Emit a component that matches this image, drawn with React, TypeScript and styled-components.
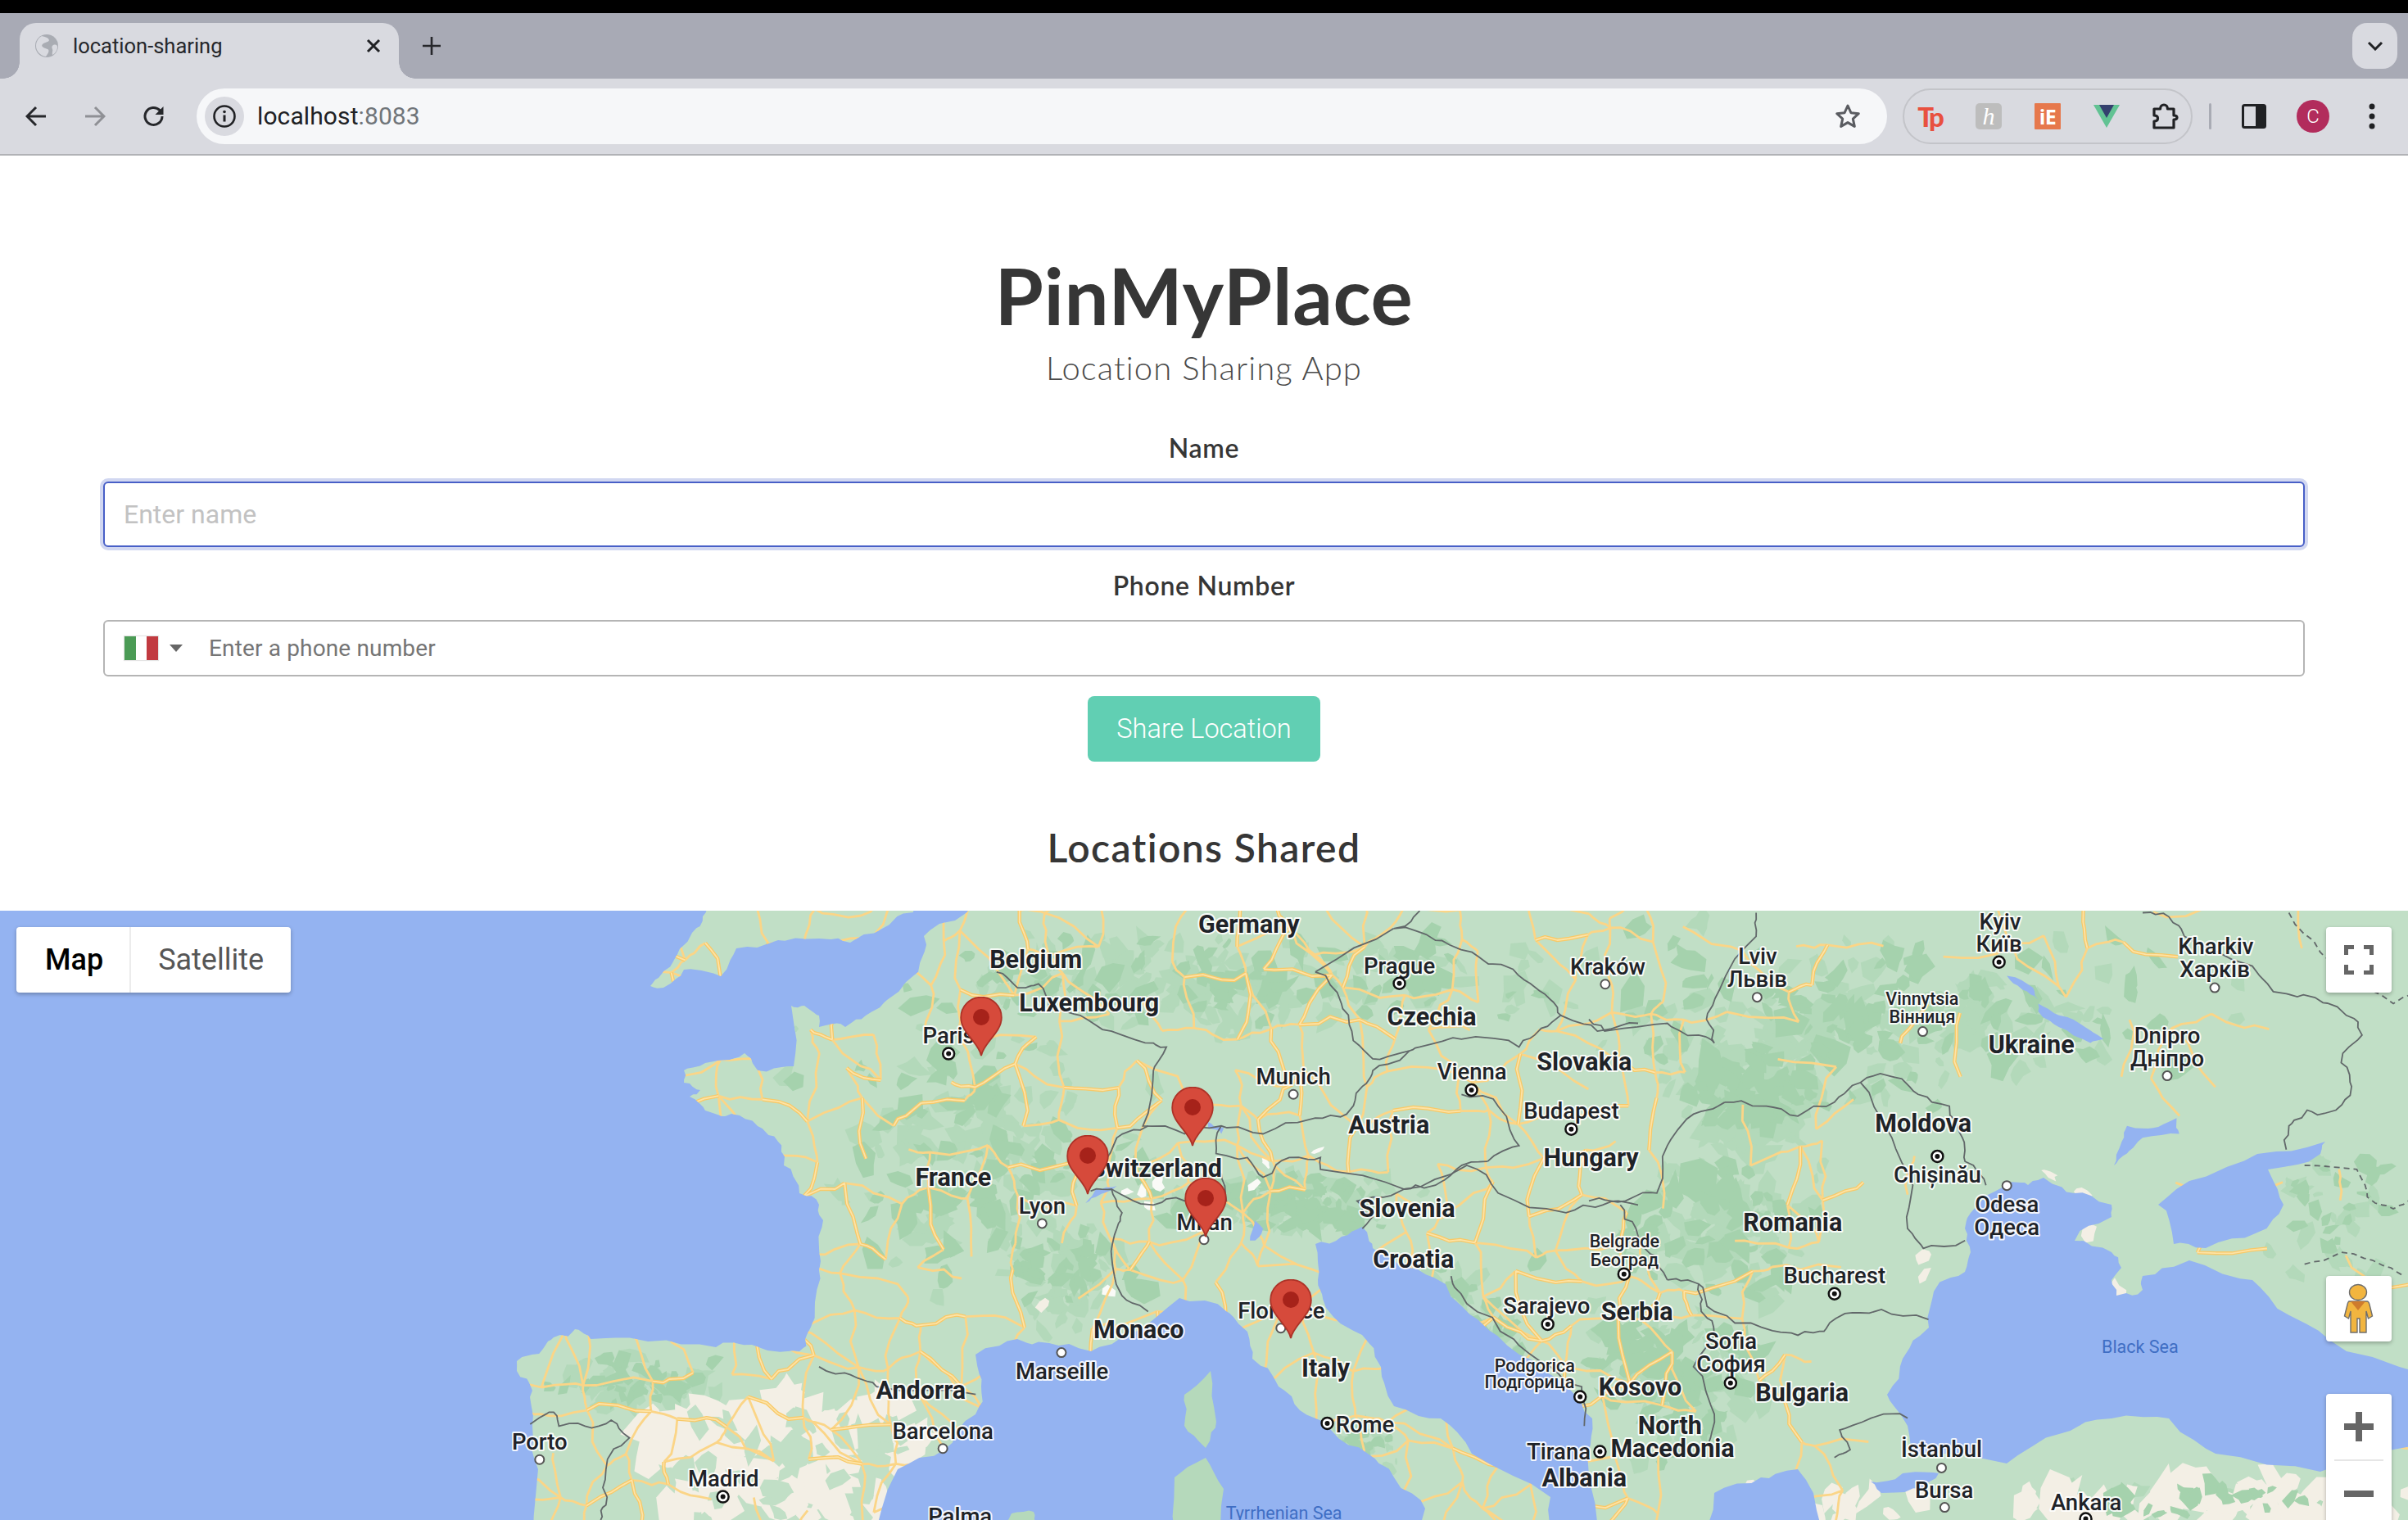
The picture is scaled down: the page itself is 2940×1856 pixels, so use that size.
import React, { useMemo } from "react";
import styled, { createGlobalStyle } from "styled-components";

type Pt = [number, number];
const z6 = (x: number, y: number): Pt => [x / 1.568, 1100 + y / 2.074];
const z7 = (x: number, y: number): Pt => [1000 + x / 1.568, 1100 + y / 2.074];
const z8 = (x: number, y: number): Pt => [1940 + x / 1.568, 1100 + y / 2.074];
const mapPts = (f: (x: number, y: number) => Pt, a: number[]) => {
  const o: Pt[] = [];
  for (let i = 0; i < a.length; i += 2) o.push(f(a[i], a[i + 1]));
  return o;
};
const pts = (a: Pt[]) => a.map((p) => `${p[0].toFixed(1)},${p[1].toFixed(1)}`).join(" ");

const rng = (seed: number) => () => {
  seed |= 0; seed = (seed + 0x6d2b79f5) | 0;
  let t = Math.imul(seed ^ (seed >>> 15), 1 | seed);
  t = (t + Math.imul(t ^ (t >>> 7), 61 | t)) ^ t;
  return ((t ^ (t >>> 14)) >>> 0) / 4294967296;
};

const roughR = rng(4242);
const roughen = (a: Pt[], amp: number, closed: boolean, depth = 2): Pt[] => {
  let cur = a;
  let k = amp;
  for (let d = 0; d < depth; d++) {
    const next: Pt[] = [];
    const n = closed ? cur.length : cur.length - 1;
    for (let i = 0; i < n; i++) {
      const p = cur[i];
      const q = cur[(i + 1) % cur.length];
      next.push(p);
      const len = Math.hypot(q[0] - p[0], q[1] - p[1]);
      if (len > 8) {
        next.push([
          (p[0] + q[0]) / 2 + (roughR() - 0.5) * Math.min(k, len * 0.35),
          (p[1] + q[1]) / 2 + (roughR() - 0.5) * Math.min(k, len * 0.35),
        ]);
      }
    }
    if (!closed) next.push(cur[cur.length - 1]);
    cur = next;
    k *= 0.6;
  }
  return cur;
};

const LAND: Pt[] = [
  [1204,1090],[1166,1124],[1128,1143],[1121,1187],[1083,1221],[1057,1240],[1032,1254],[1000,1254],[1000,1240],[982,1228],[966,1228],[969,1302],[925,1307],[909,1286],[861,1298],[835,1307],[835,1322],[855,1331],[842,1339],[861,1356],[893,1360],[925,1375],[950,1394],[957,1423],[976,1457],[1000,1471],[1005,1490],[1002,1540],[995,1590],[985,1630],[976,1650],[918,1642],[874,1645],[791,1638],[721,1635],[702,1623],[676,1633],[663,1647],[631,1662],[631,1674],[650,1698],[650,1741],[657,1794],[650,1900],[3000,1900],[3000,1090],
];
const ENGLAND: Pt[] = [[794,1204],[804,1194],[823,1172],[845,1139],[858,1119],[867,1090],[1115,1090],[1115,1114],[1077,1134],[1038,1151],[1000,1146],[950,1148],[899,1158],[880,1192],[835,1184],[810,1206]];
const MED: Pt[] = [[1064,1900],[1096,1794],[1153,1770],[1191,1727],[1198,1693],[1191,1654],[1242,1635],[1281,1640],[1332,1650],[1376,1630],[1440,1585],[1497,1601],[1523,1626],[1529,1659],[1561,1693],[1587,1722],[1625,1746],[1670,1775],[1702,1804],[1740,1842],[1746,1900]];
const ADRIATIC: Pt[] = [[1606,1519],[1638,1510],[1663,1498],[1676,1524],[1721,1548],[1765,1568],[1804,1611],[1855,1654],[1918,1698],[1944,1732],[1938,1775],[1950,1900],[1893,1900],[1893,1828],[1797,1775],[1759,1732],[1702,1717],[1686,1669],[1663,1630],[1619,1597],[1609,1563]];
const BLACK: Pt[] = [[2450,1447],[2406,1481],[2399,1500],[2406,1529],[2399,1553],[2361,1577],[2355,1621],[2323,1659],[2304,1703],[2329,1741],[2335,1775],[2450,1787],[2514,1751],[2578,1732],[2648,1732],[2705,1775],[2833,1797],[3000,1750],[3000,1690],[2865,1650],[2795,1606],[2750,1563],[2673,1539],[2616,1558],[2616,1575],[2584,1582],[2578,1563],[2590,1548],[2578,1529],[2533,1515],[2578,1486],[2578,1471],[2533,1457],[2495,1438],[2476,1447]];
const AZOV: Pt[] = [[2635,1471],[2654,1519],[2693,1524],[2756,1505],[2788,1471],[2769,1428],[2833,1409],[2839,1394],[2756,1409],[2673,1442]];
const AEGEAN: Pt[] = [[2083,1900],[2093,1823],[2150,1804],[2195,1794],[2214,1823],[2233,1900]];
const MARMARA: Pt[] = [[2284,1809],[2323,1799],[2367,1799],[2348,1818],[2297,1823]];
const CORSICA: Pt[] = [[1446,1703],[1478,1674],[1485,1736],[1472,1768],[1446,1741]];
const SARDINIA: Pt[] = [[1434,1804],[1472,1780],[1494,1818],[1491,1900],[1434,1900]];
const MALLORCA: Pt[] = [[1215,1870],[1235,1848],[1262,1846],[1270,1870]];
const LAKES: Pt[][] = [
  mapPts(z8, [860,260,900,290,950,320,985,350,960,360,900,320,860,280]),
  mapPts(z8, [1030,570,1080,575,1125,550,1130,590,1060,600,1030,640,1005,670,1020,610]),
  mapPts(z8, [800,190,850,220,860,250,830,225]),
  mapPts(z7, [745,560,775,575,770,590,745,575]),
  mapPts(z7, [530,730,570,722,530,750,510,765]),
  mapPts(z7, [835,810,850,830,835,860,825,860]),
];

const BORDERS: Pt[][] = [
  mapPts(z7, [340,180,380,220,420,210,440,270,500,290,560,330,640,360,665,370,640,430,620,570,700,590,770,570,850,590,950,550,1010,540,1040,470,1060,430,1130,380,1150,370,1230,350,1340,370,1370,340,1420,290,1400,250,1350,200,1290,160,1250,130,1180,100,1100,70,1150,25]),
  mapPts(z7, [950,180,1000,260,1020,330,1060,400,1130,380]),
  mapPts(z7, [950,180,1100,70]),
  mapPts(z7, [1420,290,1490,330,1568,310]),
  mapPts(z7, [770,570,760,640,820,650,850,700,900,650,960,650,960,680,1120,730,1180,720,1220,680,1280,660]),
  mapPts(z7, [520,720,570,600,630,570]),
  mapPts(z7, [520,735,560,730,580,790,570,830,560,900,580,1000,630,1040]),
  mapPts(z7, [560,730,640,770,700,760,780,760,770,690]),
  mapPts(z7, [1040,830,1060,800,1030,760,1120,730]),
  mapPts(z7, [1120,730,1240,670,1300,740,1430,790,1500,770,1568,770]),
  mapPts(z7, [1210,950,1240,1020,1330,1110,1400,1180,1460,1230,1465,1330]),
  mapPts(z7, [1280,660,1340,620,1300,520,1230,490]),
  mapPts(z7, [0,1180,60,1200,110,1230,300,1250]),
  mapPts(z8, [320,30,320,90,250,225,225,300,240,360,210,340,150,310,30,330,0,300]),
  mapPts(z8, [260,510,200,540,150,620,130,740,70,760,0,760]),
  mapPts(z8, [260,510,340,520,400,545,470,510,520,460,580,445,630,490,690,520,715,600,720,660,760,720]),
  mapPts(z8, [520,460,580,600,620,720,610,830,640,880,720,860]),
  mapPts(z8, [650,1060,560,1035,490,1045,450,1090,400,1100,330,1080,240,1040,210,970,150,960]),
  mapPts(z8, [210,970,215,1040,240,1100,200,1180,240,1300,230,1370]),
  mapPts(z8, [1060,30,1110,40,1140,90,1270,165,1310,230,1390,245,1450,290,1480,340,1440,410,1460,470,1430,530,1375,530,1340,570,1335,630]),
  mapPts(z8, [610,1310,540,1310,480,1340,500,1390,470,1410]),
  mapPts(z8, [60,770,90,830,130,900,150,960]),
  mapPts(z6, [1015,1325,1060,1295,1070,1330,1120,1330,1170,1315,1205,1360,1160,1440,1160,1530,1150,1568]),
].map((b) => roughen(b, 12, false));
const DASHED: Pt[][] = [
  mapPts(z8, [1340,30,1400,130,1440,180,1540,260,1568,240]),
  mapPts(z8, [1370,670,1470,680,1490,750,1540,780,1568,760]),
  mapPts(z8, [1370,920,1440,890,1500,910,1560,950]),
].map((b) => roughen(b, 8, false));

const ROUGH_LAND = pts(roughen(LAND, 11, true));
const ROUGH_ENGLAND = pts(roughen(ENGLAND, 10, true));
const SEAS = [MED, ADRIATIC, BLACK, AZOV, AEGEAN, MARMARA].map((s) => pts(roughen(s, 11, true)));
const ISLANDS = [CORSICA, SARDINIA, MALLORCA].map((s) => pts(roughen(s, 7, true)));
const LAKE_SHAPES = LAKES.map((s) => pts(roughen(s, 5, true)));

type Kind = "country" | "city" | "small" | "sea";
const L = (t: string, p: Pt, k: Kind) => ({ t, p, k });
const LABELS = [
  L("Germany", z7(823, 80), "country"), L("Belgium", z7(415, 170), "country"), L("Luxembourg", z7(517, 280), "country"),
  L("Prague", z7(1111, 184), "city"), L("Kraków", z7(1510, 186), "city"), L("Czechia", z7(1173, 316), "country"),
  L("Paris", z7(248, 360), "city"), L("Munich", z7(908, 465), "city"), L("Vienna", z7(1250, 453), "city"),
  L("Slovakia", z7(1465, 430), "country"), L("Budapest", z7(1440, 552), "city"), L("Austria", z7(1091, 590), "country"),
  L("Hungary", z7(1478, 672), "country"), L("France", z7(257, 722), "country"), L("Switzerland", z7(645, 698), "country"),
  L("Lyon", z7(427, 793), "city"), L("Milan", z7(738, 833), "city"), L("Slovenia", z7(1126, 800), "country"),
  L("Croatia", z7(1138, 930), "country"), L("Monaco", z7(612, 1108), "country"), L("Florence", z7(885, 1058), "city"),
  L("Marseille", z7(465, 1212), "city"), L("Italy", z7(970, 1205), "country"), L("Andorra", z7(195, 1262), "country"),
  L("Barcelona", z7(237, 1362), "city"), L("Rome", z7(1045, 1345), "city"), L("Sarajevo", z7(1393, 1045), "city"),
  L("Serbia", z8(92, 1062), "country"), L("Podgorica", z7(1370, 1193), "small"), L("Подгорица", z7(1360, 1233), "small"),
  L("Belgrade", z8(68, 878), "small"), L("Београд", z8(68, 925), "small"), L("Kosovo", z8(98, 1252), "country"),
  L("Tirana", z7(1416, 1415), "city"), L("Albania", z7(1465, 1483), "country"), L("North", z8(155, 1350), "country"),
  L("Macedonia", z8(160, 1408), "country"), L("Palma", z7(270, 1578), "city"), L("Tyrrhenian Sea", z7(890, 1566), "sea"),
  L("Madrid", z6(1385, 1482), "city"), L("Porto", z6(1033, 1390), "city"), L("Kyiv", z8(787, 72), "city"),
  L("Київ", z8(785, 128), "city"), L("Lviv", z8(323, 160), "city"), L("Львів", z8(322, 218), "city"),
  L("Vinnytsia", z8(638, 264), "small"), L("Вінниця", z8(638, 310), "small"), L("Ukraine", z8(847, 385), "country"),
  L("Kharkiv", z8(1200, 135), "city"), L("Харків", z8(1198, 193), "city"), L("Dnipro", z8(1107, 360), "city"),
  L("Дніпро", z8(1107, 418), "city"), L("Moldova", z8(640, 585), "country"), L("Chișinău", z8(667, 713), "city"),
  L("Odesa", z8(800, 788), "city"), L("Одеса", z8(800, 846), "city"), L("Romania", z8(390, 835), "country"),
  L("Bucharest", z8(470, 968), "city"), L("Sofia", z8(272, 1135), "city"), L("София", z8(272, 1193), "city"),
  L("Bulgaria", z8(408, 1268), "country"), L("Black Sea", z8(1055, 1145), "sea"), L("İstanbul", z8(675, 1408), "city"),
  L("Bursa", z8(680, 1512), "city"), L("Ankara", z8(952, 1543), "city"),
];

const CAPITALS: Pt[] = [z7(248,387), z7(1111,209), z7(1249,479), z7(1440,578), z7(973,1323), z7(1395,1072), z7(1541,945), z7(1457,1256), z7(1495,1395), z6(1384,1509), z8(785,155), z8(667,647), z8(470,995), z8(271,1221), z8(951,1565)];
const TOWNS: Pt[] = [z7(1505,211), z7(908,490), z7(427,817), z7(737,858), z7(884,1082), z7(464,1144), z7(237,1387), z6(1033,1415), z8(322,244), z8(639,331), z8(1198,220), z8(1107,443), z8(800,721), z8(675,1436), z8(681,1536)];
const PIN_TIPS: Pt[] = [z7(311,392), z7(715,620), z7(515,742), z7(740,850), z7(903,1107)];

const blob = (r: () => number, cx: number, cy: number, size: number) => {
  const n = 5 + Math.floor(r() * 5);
  const out: Pt[] = [];
  const rot = r() * Math.PI;
  const sq = 0.35 + r() * 0.55;
  for (let i = 0; i < n; i++) {
    const a = (i / n) * Math.PI * 2;
    const d = size * (0.45 + r() * 0.75);
    const dx = Math.cos(a) * d;
    const dy = Math.sin(a) * d * sq;
    out.push([cx + dx * Math.cos(rot) - dy * Math.sin(rot), cy + dx * Math.sin(rot) + dy * Math.cos(rot)]);
  }
  return pts(out);
};

type Cluster = { c: Pt; sx: number; sy: number; n: number; s: number };
const DARK: Cluster[] = [
  { c: [1500, 1200], sx: 560, sy: 90, n: 190, s: 17 },
  { c: [1200, 1400], sx: 260, sy: 230, n: 170, s: 18 },
  { c: [1570, 1470], sx: 190, sy: 45, n: 170, s: 14 },
  { c: [1780, 1620], sx: 120, sy: 100, n: 110, s: 15 },
  { c: [2140, 1340], sx: 130, sy: 110, n: 130, s: 20 },
  { c: [2100, 1500], sx: 140, sy: 120, n: 120, s: 18 },
  { c: [2300, 1240], sx: 500, sy: 130, n: 220, s: 17 },
  { c: [2050, 1680], sx: 160, sy: 130, n: 130, s: 16 },
  { c: [780, 1690], sx: 140, sy: 40, n: 70, s: 14 },
  { c: [1300, 1560], sx: 100, sy: 80, n: 70, s: 13 },
  { c: [1660, 1770], sx: 70, sy: 60, n: 40, s: 10 },
  { c: [2700, 1830], sx: 220, sy: 24, n: 50, s: 14 },
  { c: [2850, 1480], sx: 110, sy: 110, n: 40, s: 14 },
];

const buildTexture = () => {
  const r = rng(8083);
  const gauss = () => (r() + r() + r() - 1.5) / 1.5;
  const dark: string[] = [];
  const mid: string[] = [];
  DARK.forEach((cl) => {
    for (let i = 0; i < cl.n; i++) {
      const x = cl.c[0] + gauss() * cl.sx;
      const y = cl.c[1] + gauss() * cl.sy;
      (r() > 0.55 ? dark : mid).push(blob(r, x, y, cl.s * (0.5 + r())));
    }
  });
  const beige: string[] = [];
  for (let i = 0; i < 60; i++) beige.push(blob(r, 790 + r() * 320, 1715 + r() * 140, 22 + r() * 24));
  for (let i = 0; i < 50; i++) beige.push(blob(r, 2470 + r() * 470, 1812 + r() * 44, 18 + r() * 22));
  for (let i = 0; i < 12; i++) beige.push(blob(r, 2120 + r() * 240, 1815 + r() * 40, 12 + r() * 12));
  [z8(640,950), z8(640,900), z8(960,840), z8(880,690), z8(950,740), z8(1010,980), z7(430,1020)].forEach((p) => beige.push(blob(r, p[0], p[1], 14)));
  const spainGreen: string[] = [];
  for (let i = 0; i < 30; i++) spainGreen.push(blob(r, 810 + r() * 300, 1730 + r() * 125, 10 + r() * 18));
  const snow: string[] = [];
  [z7(620,740), z7(650,715), z7(630,775), z7(855,665), z7(832,722), z7(955,632), z7(555,992), z7(590,738)].forEach((p) => snow.push(blob(r, p[0], p[1], 9 + r() * 5)));

  const wobble = (a: Pt, b: Pt) => {
    const line = roughen([a, b], Math.hypot(b[0] - a[0], b[1] - a[1]) * 0.22, false, 2);
    return "M" + line.map((p) => `${p[0].toFixed(1)} ${p[1].toFixed(1)}`).join("L");
  };
  const cell = 52;
  const cols = Math.ceil(2420 / cell);
  const rows = Math.ceil(800 / cell);
  const grid: (Pt | null)[][] = [];
  for (let j = 0; j <= rows; j++) {
    const row: (Pt | null)[] = [];
    for (let i = 0; i <= cols; i++) {
      const x = 620 + i * cell + (r() - 0.5) * cell * 0.85;
      const y = 1100 + j * cell + (r() - 0.5) * cell * 0.85;
      const east = x > 2250 ? 0.5 : x > 2050 ? 0.25 : 0;
      row.push(r() < 0.96 - east ? [x, y] : null);
    }
    grid.push(row);
  }
  const minor: string[] = [];
  const major: string[] = [];
  for (let j = 0; j <= rows; j++) {
    for (let i = 0; i <= cols; i++) {
      const a = grid[j][i];
      if (!a) continue;
      const right = i < cols ? grid[j][i + 1] : null;
      const down = j < rows ? grid[j + 1][i] : null;
      const diag = j < rows && i < cols ? grid[j + 1][i + 1] : null;
      const p = a[0] > 2250 ? 0.45 : 0.74;
      if (right && r() < p) (r() < 0.24 ? major : minor).push(wobble(a, right));
      if (down && r() < p) (r() < 0.24 ? major : minor).push(wobble(a, down));
      if (diag && r() < 0.12) minor.push(wobble(a, diag));
    }
  }
  return { dark, mid, beige, spainGreen, snow, minor: minor.join(""), major: major.join("") };
};

const Global = createGlobalStyle`
  html, body { margin: 0; padding: 0; background: #fff; }
  body { font-family: "Lato", "Liberation Sans", sans-serif; overflow: hidden; }
  #root { width: 2940px; height: 1856px; overflow: hidden; }
`;

const Window = styled.div`
  width: 2940px;
  height: 1856px;
  display: flex;
  flex-direction: column;
  overflow: hidden;
  background: #fff;
`;
const BlackEdge = styled.div`
  height: 16px;
  flex: none;
  background: #000;
`;
const TabStrip = styled.div`
  height: 80px;
  flex: none;
  background: #a8aab5;
  display: flex;
  align-items: flex-end;
  padding: 0 13px 0 24px;
`;
const Tab = styled.div`
  position: relative;
  width: 463px;
  height: 68px;
  background: #d9dae0;
  border-radius: 20px 20px 0 0;
  display: flex;
  align-items: flex-start;
  padding: 10px 0 0 18px;
  box-sizing: border-box;
  &::before,
  &::after {
    content: "";
    position: absolute;
    bottom: 0;
    width: 20px;
    height: 20px;
  }
  &::before {
    left: -20px;
    background: radial-gradient(circle at 0 0, #a8aab5 19.5px, #d9dae0 20px);
  }
  &::after {
    right: -20px;
    background: radial-gradient(circle at 100% 0, #a8aab5 19.5px, #d9dae0 20px);
  }
`;
const TabTitle = styled.span`
  font: 400 25.5px/36px "Roboto", sans-serif;
  color: #26272b;
  margin-left: 17px;
  flex: 1;
`;
const TabGlyph = styled.svg`
  flex: none;
  display: block;
`;
const TabClose = styled(TabGlyph)`
  margin: 9px 22px 0 0;
`;
const NewTab = styled(TabGlyph)`
  margin: 0 0 29px 29px;
`;
const StripSpacer = styled.div`
  flex: 1;
`;
const TabListButton = styled.div`
  width: 55px;
  height: 56px;
  margin-bottom: 12px;
  border-radius: 18px;
  background: #d9dae0;
  display: flex;
  align-items: center;
  justify-content: center;
`;
const Toolbar = styled.div`
  height: 92px;
  flex: none;
  background: #d9dae0;
  border-bottom: 2px solid #b1b2b6;
  display: flex;
  align-items: center;
  padding: 0 8px;
  box-sizing: content-box;
  position: relative;
`;
const ToolCell = styled.div`
  width: 72px;
  height: 68px;
  flex: none;
  display: flex;
  align-items: center;
  justify-content: center;
`;
const AddressBar = styled.div`
  flex: 1;
  height: 68px;
  margin-left: 16px;
  border-radius: 34px;
  background: #f6f7f9;
  display: flex;
  align-items: center;
  padding: 0 32px 0 10px;
`;
const InfoBubble = styled.div`
  width: 48px;
  height: 48px;
  border-radius: 50%;
  background: #d9dae0;
  display: flex;
  align-items: center;
  justify-content: center;
  flex: none;
`;
const Url = styled.span`
  font: 400 30px/40px "Roboto", sans-serif;
  letter-spacing: 0.1px;
  color: #202124;
  margin-left: 16px;
  flex: 1;
`;
const UrlPort = styled.span`
  color: #70757a;
`;
const ExtensionPill = styled.div`
  width: 354px;
  height: 68px;
  margin-left: 19px;
  box-sizing: border-box;
  border: 2px solid #c3c4c9;
  border-radius: 34px;
  display: flex;
  align-items: center;
  justify-content: center;
  gap: 8px;
  flex: none;
`;
const ExtCell = styled.div`
  width: 64px;
  height: 60px;
  flex: none;
  display: flex;
  align-items: center;
  justify-content: center;
`;
const ExtSquare = styled.div<{ $bg: string; $radius: number }>`
  width: 32px;
  height: 32px;
  background: ${(p) => p.$bg};
  border-radius: ${(p) => p.$radius}px;
  color: #fff;
  display: flex;
  align-items: center;
  justify-content: center;
`;
const HandH = styled.span`
  font: italic 400 30px/1 "Liberation Serif", serif;
  color: #fff;
`;
const IEText = styled.span`
  font: 700 25px/1 "Open Sans", sans-serif;
  color: #fff;
  letter-spacing: -0.5px;
`;
const TpText = styled.span`
  font: 900 33px/1 "Lato", sans-serif;
  color: #e8503f;
  letter-spacing: -3px;
`;
const Separator = styled.div`
  width: 3px;
  height: 32px;
  margin: 0 16px 0 20px;
  background: #a9abb4;
  border-radius: 2px;
  flex: none;
`;
const Avatar = styled.div`
  width: 40px;
  height: 40px;
  border-radius: 50%;
  background: #b22c5c;
  color: #fff;
  font: 300 24px/40px "Roboto", sans-serif;
  text-align: center;
`;
const Page = styled.main`
  flex: 1;
  min-height: 0;
  display: flex;
  flex-direction: column;
  align-items: center;
`;
const Form = styled.section`
  width: 100%;
  box-sizing: border-box;
  padding: 122px 126px 0;
  display: flex;
  flex-direction: column;
  align-items: center;
  flex: none;
`;
const Title = styled.h1`
  margin: 0;
  font: 700 96px/96px "Lato", sans-serif;
  color: #363636;
  letter-spacing: 0.6px;
`;
const Subtitle = styled.p`
  margin: 17px 0 0;
  font: 300 40px/48px "Lato", sans-serif;
  color: #4a4a4a;
  letter-spacing: 1.1px;
`;
const FieldLabel = styled.label<{ $top: number }>`
  margin-top: ${(p) => p.$top}px;
  font: 600 32px/40px "Lato", sans-serif;
  color: #363636;
  letter-spacing: 0.7px;
`;
const NameInput = styled.input`
  width: 100%;
  height: 80px;
  margin-top: 21px;
  box-sizing: border-box;
  padding: 0 23px;
  border: 2px solid #485fc7;
  border-radius: 6px;
  box-shadow: 0 0 0 4px rgba(72, 95, 199, 0.25);
  outline: none;
  background: #fff;
  font: 400 32px "Roboto", sans-serif;
  color: #363636;
  &::placeholder {
    color: #c2c2c2;
    opacity: 1;
  }
`;
const PhoneBox = styled.div`
  width: 100%;
  height: 69px;
  margin-top: 22px;
  box-sizing: border-box;
  border: 2px solid #b5b5b5;
  border-radius: 6px;
  display: flex;
  align-items: center;
  padding-left: 24px;
`;
const Flag = styled.div`
  width: 41px;
  height: 29px;
  display: grid;
  grid-template-columns: 1fr 1fr 1fr;
  box-shadow: 0 0 1px 1px #e4e4e4;
  flex: none;
`;
const FlagBand = styled.div<{ $c: string }>`
  background: ${(p) => p.$c};
`;
const Caret = styled.div`
  width: 0;
  height: 0;
  margin-left: 14px;
  border-left: 8.5px solid transparent;
  border-right: 8.5px solid transparent;
  border-top: 9px solid #666;
  flex: none;
`;
const PhoneInput = styled.input`
  flex: 1;
  margin-left: 30px;
  border: none;
  outline: none;
  background: transparent;
  font: 400 28px "Roboto", sans-serif;
  letter-spacing: 0.15px;
  color: #363636;
  &::placeholder {
    color: #757575;
    opacity: 1;
  }
`;
const ShareButton = styled.button`
  width: 284px;
  height: 80px;
  margin-top: 24px;
  border: none;
  border-radius: 8px;
  background: #61cfb3;
  color: #fff;
  font: 300 32.5px "Roboto", sans-serif;
  cursor: pointer;
`;
const SectionTitle = styled.h2`
  margin: 77px 0 0;
  font: 600 48px/56px "Lato", sans-serif;
  color: #363636;
  letter-spacing: 1.4px;
`;
const MapFrame = styled.div`
  position: relative;
  width: 100%;
  height: 744px;
  margin-top: 49px;
  flex: none;
  overflow: hidden;
  background: #94b3f1;
`;
const MapDrawing = styled.svg`
  display: block;
  width: 2940px;
  height: 744px;
`;
const MapLabel = styled.text<{ $k: Kind }>`
  font-family: "Roboto", "Noto Sans", sans-serif;
  font-size: ${(p) => (p.$k === "country" ? 30.5 : p.$k === "city" ? 27.5 : 21.5)}px;
  font-weight: ${(p) => (p.$k === "country" ? 700 : p.$k === "sea" ? 400 : 500)};
  fill: ${(p) => (p.$k === "sea" ? "#3f6ec4" : "#1f2328")};
  stroke: ${(p) => (p.$k === "sea" ? "none" : "rgba(255,255,255,0.88)")};
  stroke-width: 4px;
  stroke-linejoin: round;
  paint-order: stroke;
  text-anchor: middle;
`;
const Marker = styled.svg`
  position: absolute;
  width: 52px;
  height: 73px;
  display: block;
`;
const ControlCard = styled.div`
  position: absolute;
  background: #fff;
  border-radius: 4px;
  box-shadow: 0 2px 5px rgba(0, 0, 0, 0.28);
  display: flex;
`;
const MapTypeCard = styled(ControlCard)`
  left: 20px;
  top: 20px;
  height: 80px;
`;
const MapTypeButton = styled.div<{ $active?: boolean }>`
  height: 80px;
  box-sizing: border-box;
  padding: ${(p) => (p.$active ? "0 32px 0 35px" : "0 33px 0 33px")};
  font: ${(p) => (p.$active ? 500 : 400)} 36px/80px "Roboto", sans-serif;
  color: ${(p) => (p.$active ? "#000" : "#565656")};
  & + & {
    border-left: 2px solid #ececec;
  }
`;
const SquareControl = styled(ControlCard)<{ $top: number }>`
  left: 2840px;
  top: ${(p) => p.$top}px;
  width: 80px;
  height: 80px;
  align-items: center;
  justify-content: center;
`;
const ZoomCard = styled(ControlCard)`
  left: 2840px;
  top: 590px;
  width: 80px;
  height: 162px;
  flex-direction: column;
  align-items: center;
`;
const ZoomButton = styled.div`
  height: 80px;
  width: 100%;
  display: flex;
  align-items: center;
  justify-content: center;
`;
const ZoomDivider = styled.div`
  width: 60px;
  height: 2px;
  background: #e6e6e6;
  flex: none;
`;

const CityDot = ({ p, capital }: { p: Pt; capital: boolean }) =>
  capital ? (
    <g>
      <circle cx={p[0]} cy={p[1]} r={7} fill="#fff" stroke="#111" strokeWidth={2.5} />
      <circle cx={p[0]} cy={p[1]} r={3} fill="#111" />
    </g>
  ) : (
    <circle cx={p[0]} cy={p[1]} r={5.5} fill="#fff" stroke="#555" strokeWidth={2} />
  );

const MapView = () => {
  const tex = useMemo(buildTexture, []);
  return (
    <MapDrawing viewBox="0 1112 2940 744">
      <defs>
        <clipPath id="landClip">
          <polygon points={ROUGH_LAND} />
          <polygon points={ROUGH_ENGLAND} />
        </clipPath>
      </defs>
      <g clipPath="url(#landClip)">
        <rect x="0" y="1090" width="3000" height="800" fill="#c1dfc6" />
        {tex.mid.map((d, i) => <polygon key={i} points={d} fill="#b3d9ba" />)}
        {tex.beige.map((d, i) => <polygon key={i} points={d} fill="#f3efe5" />)}
        {tex.spainGreen.map((d, i) => <polygon key={i} points={d} fill="#c1dfc6" />)}
        {tex.dark.map((d, i) => <polygon key={i} points={d} fill="#a5d2ad" />)}
        {tex.snow.map((d, i) => <polygon key={i} points={d} fill="#fafaf7" />)}
        <path d={tex.minor} fill="none" stroke="#fbd587" strokeWidth={2.8} strokeLinejoin="round" />
        <path d={tex.major} fill="none" stroke="#f8c968" strokeWidth={4.4} strokeLinejoin="round" />
        <path d={tex.major} fill="none" stroke="#fde3a6" strokeWidth={1.8} strokeLinejoin="round" />
      </g>
      {SEAS.map((s, i) => <polygon key={i} points={s} fill="#94b3f1" />)}
      {LAKE_SHAPES.map((s, i) => <polygon key={i} points={s} fill="#94b3f1" />)}
      {ISLANDS.map((s, i) => <polygon key={i} points={s} fill="#b5d9bb" />)}
      {BORDERS.map((b, i) => (
        <polyline key={i} points={pts(b)} fill="none" stroke="#62686a" strokeWidth={1.8} />
      ))}
      {DASHED.map((b, i) => (
        <polyline key={i} points={pts(b)} fill="none" stroke="#62686a" strokeWidth={1.8} strokeDasharray="7 5" />
      ))}
      {LABELS.map((l) => (
        <MapLabel key={l.t} x={l.p[0]} y={l.p[1]} $k={l.k}>{l.t}</MapLabel>
      ))}
      {CAPITALS.map((p, i) => <CityDot key={i} p={p} capital />)}
      {TOWNS.map((p, i) => <CityDot key={i} p={p} capital={false} />)}
    </MapDrawing>
  );
};

const Pin = ({ tip }: { tip: Pt }) => (
  <Marker viewBox="0 0 52 73" style={{ left: tip[0] - 26, top: tip[1] - 1112 - 72 }}>
    <path d="M26 72C23 56 1.2 44 1.2 25.5a24.8 24.8 0 0 1 49.6 0C50.8 44 29 56 26 72Z" fill="#d64a3b" stroke="#ad3328" strokeWidth="1.8" />
    <circle cx="26" cy="25" r="10" fill="#a6221a" />
  </Marker>
);

export default function App() {
  return (
    <Window>
      <Global />
      <BlackEdge />
      <TabStrip>
        <Tab>
          <TabGlyph width="30" height="30" viewBox="0 0 30 30" style={{ marginTop: 3 }}>
            <circle cx="15" cy="15" r="14" fill="#a9acb3" />
            <path d="M9 3c4 1 8 2 9 5-1 3-5 2-8 5s3 5 6 6 1 5-2 9C7 27 2 21 2 15c0-5 3-10 7-12Zm14 11c3-1 5 0 5 2 0 4-2 8-6 10-1-3 1-5 0-7s-1-4 1-5Z" fill="#d9dae0" />
          </TabGlyph>
          <TabTitle>location-sharing</TabTitle>
          <TabClose width="18" height="18" viewBox="0 0 18 18">
            <path d="M2 2l14 14M16 2L2 16" stroke="#202124" strokeWidth="3" fill="none" />
          </TabClose>
        </Tab>
        <NewTab width="22" height="22" viewBox="0 0 22 22">
          <path d="M11 0v22M0 11h22" stroke="#26272b" strokeWidth="2.6" fill="none" />
        </NewTab>
        <StripSpacer />
        <TabListButton>
          <svg width="20" height="12" viewBox="0 0 20 12">
            <path d="M2 2l8 8 8-8" stroke="#202124" strokeWidth="3" fill="none" />
          </svg>
        </TabListButton>
      </TabStrip>
      <Toolbar>
        <ToolCell>
          <svg width="26" height="26" viewBox="0 0 26 26">
            <path d="M25 13H3M13 2L2 13l11 11" stroke="#26272b" strokeWidth="3" fill="none" />
          </svg>
        </ToolCell>
        <ToolCell>
          <svg width="26" height="26" viewBox="0 0 26 26">
            <path d="M1 13h22M13 2l11 11-11 11" stroke="#8f9095" strokeWidth="3" fill="none" />
          </svg>
        </ToolCell>
        <ToolCell>
          <svg width="28" height="28" viewBox="0 0 28 28">
            <path d="M24 14a10.5 10.5 0 1 1-3-7.4L24 9.5" stroke="#26272b" strokeWidth="3" fill="none" />
            <path d="M25.5 2v10h-10z" fill="#26272b" />
          </svg>
        </ToolCell>
        <AddressBar>
          <InfoBubble>
            <svg width="28" height="28" viewBox="0 0 28 28">
              <circle cx="14" cy="14" r="12.5" stroke="#202124" strokeWidth="2.6" fill="none" />
              <path d="M14 12.5v8" stroke="#202124" strokeWidth="3" />
              <circle cx="14" cy="8.5" r="1.8" fill="#202124" />
            </svg>
          </InfoBubble>
          <Url>localhost<UrlPort>:8083</UrlPort></Url>
          <svg width="32" height="32" viewBox="0 0 32 32">
            <path d="M16 3l3.9 8.7 9.4 1-7 6.4 2 9.3-8.3-4.8-8.3 4.8 2-9.3-7-6.4 9.4-1z" stroke="#5a5c61" strokeWidth="3" fill="none" strokeLinejoin="round" />
          </svg>
        </AddressBar>
        <ExtensionPill>
          <ExtCell><TpText>Tp</TpText></ExtCell>
          <ExtCell><ExtSquare $bg="#bdbdbd" $radius={5}><HandH>h</HandH></ExtSquare></ExtCell>
          <ExtCell><ExtSquare $bg="#e6784c" $radius={1}><IEText>iE</IEText></ExtSquare></ExtCell>
          <ExtCell>
            <svg width="32" height="28" viewBox="0 0 32 28">
              <path d="M0 0h32L16 28z" fill="#62c293" />
              <path d="M7 0h18l-9 16z" fill="#34406e" />
            </svg>
          </ExtCell>
          <ExtCell>
            <svg width="34" height="34" viewBox="0 0 34 34">
              <path d="M3 8h7.500c0-3 2-5 4.500-5s4.500 2 4.500 5H27v8c3 0 4 1 4 2.500S30 21 27 21v10H3v-8c3 0 4.500-1.500 4.500-3.500S6 16 3 16z" stroke="#202124" strokeWidth="3.2" fill="none" strokeLinejoin="round" />
            </svg>
          </ExtCell>
        </ExtensionPill>
        <Separator />
        <ToolCell>
          <svg width="30" height="30" viewBox="0 0 30 30">
            <rect x="1.500" y="1.500" width="27" height="27" rx="2" stroke="#202124" strokeWidth="3" fill="none" />
            <rect x="17" y="1.500" width="11.500" height="27" fill="#202124" />
          </svg>
        </ToolCell>
        <ToolCell><Avatar>C</Avatar></ToolCell>
        <ToolCell>
          <svg width="8" height="32" viewBox="0 0 8 32">
            <circle cx="4" cy="4" r="3.500" fill="#202124" />
            <circle cx="4" cy="16" r="3.500" fill="#202124" />
            <circle cx="4" cy="28" r="3.500" fill="#202124" />
          </svg>
        </ToolCell>
      </Toolbar>
      <Page>
        <Form>
          <Title>PinMyPlace</Title>
          <Subtitle>Location Sharing App</Subtitle>
          <FieldLabel $top={54}>Name</FieldLabel>
          <NameInput placeholder="Enter name" />
          <FieldLabel $top={27}>Phone Number</FieldLabel>
          <PhoneBox>
            <Flag>
              <FlagBand $c="#4b9b55" />
              <FlagBand $c="#fff" />
              <FlagBand $c="#c13a40" />
            </Flag>
            <Caret />
            <PhoneInput placeholder="Enter a phone number" />
          </PhoneBox>
          <ShareButton>Share Location</ShareButton>
          <SectionTitle>Locations Shared</SectionTitle>
        </Form>
        <MapFrame>
          <MapView />
          {PIN_TIPS.map((t, i) => <Pin key={i} tip={t} />)}
          <MapTypeCard>
            <MapTypeButton $active>Map</MapTypeButton>
            <MapTypeButton>Satellite</MapTypeButton>
          </MapTypeCard>
          <SquareControl $top={20}>
            <svg width="36" height="36" viewBox="0 0 36 36">
              <path d="M2.500 12V2.500H12M24 2.500h9.500V12M33.500 24v9.500H24M12 33.500H2.500V24" stroke="#666" strokeWidth="5" fill="none" />
            </svg>
          </SquareControl>
          <SquareControl $top={446}>
            <svg width="80" height="80" viewBox="0 0 80 80">
              <path d="M28 31h22q2 0 3 4l3.500 14-5 3L49 43v26h-8V52h-3v17h-8V43l-2.500 9-5-3L26 35q1-4 2-4Z" fill="#f2b53f" stroke="#6e6e6e" strokeWidth="1.4" />
              <path d="M30 31h18l-9 11z" fill="#cf7b2c" />
              <ellipse cx="39" cy="20" rx="10.500" ry="9.500" fill="#f2b53f" stroke="#6e6e6e" strokeWidth="1.4" />
            </svg>
          </SquareControl>
          <ZoomCard>
            <ZoomButton>
              <svg width="36" height="36" viewBox="0 0 36 36">
                <path d="M0 18h36M18 0v36" stroke="#666" strokeWidth="8" />
              </svg>
            </ZoomButton>
            <ZoomDivider />
            <ZoomButton>
              <svg width="36" height="8" viewBox="0 0 36 8">
                <path d="M0 4h36" stroke="#666" strokeWidth="8" />
              </svg>
            </ZoomButton>
          </ZoomCard>
        </MapFrame>
      </Page>
    </Window>
  );
}
